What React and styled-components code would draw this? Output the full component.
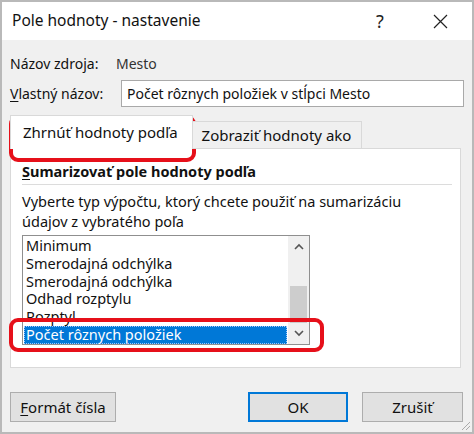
import React from "react";
import styled, { createGlobalStyle } from "styled-components";

const Global = createGlobalStyle`
  html, body { margin: 0; padding: 0; background: #f0f0f0; }
  * { box-sizing: border-box; }
  body { font-family: "Noto Sans", "Open Sans", sans-serif; color: #111; }
`;

const Window = styled.div`
  position: relative;
  width: 474px;
  height: 434px;
  border: 2px solid #b9b9b9;
  display: flex;
  flex-direction: column;
  background: #f0f0f0;
  font-size: 14px;
`;

const TitleBar = styled.div`
  height: 38px;
  background: #fff;
  display: flex;
  align-items: center;
  padding-left: 10px;
  padding-right: 9px;
  flex: none;
`;

const Title = styled.div`
  flex: 1;
  font-size: 15.5px;
  color: #111;
  padding-bottom: 2px;
`;

const TitleButton = styled.div`
  width: ${(p) => p.$w}px;
  height: 38px;
  display: flex;
  align-items: center;
  justify-content: center;
  font-size: 18px;
  color: #222;
`;

const Body = styled.div`
  flex: 1;
  display: flex;
  flex-direction: column;
  padding: 11px 8px 0 8px;
`;

const FieldRow = styled.div`
  display: flex;
  align-items: center;
  height: ${(p) => p.$h}px;
`;

const Label = styled.div`
  width: ${(p) => p.$w}px;
  flex: none;
`;

const Value = styled.span`
  color: #333;
`;

const U = styled.span`
  text-decoration: underline;
  text-underline-offset: 2px;
`;

const Input = styled.div`
  width: 343px;
  height: 27px;
  border: 1px solid #a9a9a9;
  background: #fff;
  display: flex;
  align-items: center;
  padding-left: 5px;
`;

const TabStrip = styled.div`
  display: flex;
  align-items: flex-end;
  margin-top: 5px;
  height: 33px;
  position: relative;
  z-index: 1;
`;

const Tab = styled.div`
  height: ${(p) => (p.$active ? 34 : 28)}px;
  padding: ${(p) => (p.$active ? "0 14px 2px 12px" : "0 10px 0 9px")};
  display: flex;
  align-items: center;
  background: ${(p) => (p.$active ? "#fff" : "#f0f0f0")};
  border: 1px solid #d9d9d9;
  border-bottom: ${(p) => (p.$active ? "none" : "1px solid #d9d9d9")};
  margin-left: ${(p) => (p.$active ? 0 : -1)}px;
  font-size: 15px;
`;

const Panel = styled.div`
  width: 451px;
  height: 220px;
  background: #fff;
  border: 1px solid #d9d9d9;
  margin-top: -1px;
  padding: 12px 8px 0 11px;
  display: flex;
  flex-direction: column;
`;

const Heading = styled.div`
  font-weight: bold;
  font-size: 14.5px;
  line-height: 20px;
`;

const Separator = styled.div`
  height: 1px;
  background: #dcdcdc;
  margin: 3px 0 6px 0;
`;

const Description = styled.div`
  line-height: 20px;
  font-size: 14.5px;
`;

const ListBox = styled.div`
  margin-top: 4px;
  width: 288px;
  height: 110px;
  border: 1px solid #8f8f8f;
  background: #fff;
  display: flex;
`;

const Items = styled.div`
  flex: 1;
  display: flex;
  flex-direction: column;
  padding: 1px 1px 0 1px;
`;

const Item = styled.div`
  height: 18px;
  line-height: 17px;
  padding-left: 2px;
  font-size: 14.5px;
  white-space: nowrap;
  background: ${(p) => (p.$sel ? "#0078d7" : "transparent")};
  color: ${(p) => (p.$sel ? "#fff" : "#111")};
  outline: ${(p) => (p.$sel ? "1px dotted #9ec8ff" : "none")};
  outline-offset: -1px;
`;

const ScrollBar = styled.div`
  width: 21px;
  background: #f0f0f0;
  display: flex;
  flex-direction: column;
`;

const Arrow = styled.div`
  height: 21px;
  display: flex;
  align-items: center;
  justify-content: center;
`;

const Track = styled.div`
  flex: 1;
  display: flex;
  flex-direction: column;
  padding: 0 2px;
`;

const Thumb = styled.div`
  margin-top: ${(p) => p.$top}px;
  height: ${(p) => p.$h}px;
  background: #cdcdcd;
`;

const ButtonRow = styled.div`
  display: flex;
  margin-top: 24px;
`;

const Button = styled.div`
  width: ${(p) => p.$w}px;
  height: 30px;
  display: flex;
  align-items: center;
  justify-content: center;
  background: #e1e1e1;
  border: ${(p) => (p.$focus ? "2px solid #0078d7" : "1px solid #adadad")};
  margin-left: ${(p) => p.$ml || 0}px;
  font-size: 15px;
`;

const Annotation = styled.div`
  position: absolute;
  left: ${(p) => p.$x}px;
  top: ${(p) => p.$y}px;
  width: ${(p) => p.$w}px;
  height: ${(p) => p.$h}px;
  border: 4px solid #e6101a;
  border-radius: 9px;
  pointer-events: none;
`;

const Grip = styled.svg`
  position: absolute;
  right: 1px;
  bottom: 1px;
`;

const Chevron = ({ up }) => (
  <svg width="10" height="7" viewBox="0 0 10 7">
    <path
      d={up ? "M1 6 L5 2 L9 6" : "M1 1 L5 5 L9 1"}
      fill="none"
      stroke="#555"
      strokeWidth="1.6"
    />
  </svg>
);

export default function App() {
  const items = [
    "Minimum",
    "Smerodajná odchýlka",
    "Smerodajná odchýlka",
    "Odhad rozptylu",
    "Rozptyl",
    "Počet rôznych položiek",
  ];
  return (
    <>
      <Global />
      <Window>
        <TitleBar>
          <Title>Pole hodnoty - nastavenie</Title>
          <TitleButton $w={74}>?</TitleButton>
          <TitleButton $w={46}>
            <svg width="15" height="15" viewBox="0 0 15 15">
              <path d="M1 1 L14 14 M14 1 L1 14" stroke="#222" strokeWidth="1.2" />
            </svg>
          </TitleButton>
        </TitleBar>
        <Body>
          <FieldRow $h={24}>
            <Label $w={106}>Názov zdroja:</Label>
            <Value>Mesto</Value>
          </FieldRow>
          <FieldRow $h={36}>
            <Label $w={111}>
              <U>V</U>lastný názov:
            </Label>
            <Input>Počet rôznych položiek v stĺpci Mesto</Input>
          </FieldRow>
          <TabStrip>
            <Tab $active>Zhrnúť hodnoty podľa</Tab>
            <Tab>Zobraziť hodnoty ako</Tab>
          </TabStrip>
          <Panel>
            <Heading>
              <U>S</U>umarizovať pole hodnoty podľa
            </Heading>
            <Separator />
            <Description>
              Vyberte typ výpočtu, ktorý chcete použiť na sumarizáciu
              <br />
              údajov z vybratého poľa
            </Description>
            <ListBox>
              <Items>
                {items.map((t, i) => (
                  <Item key={i} $sel={i === items.length - 1}>
                    {t}
                  </Item>
                ))}
              </Items>
              <ScrollBar>
                <Arrow>
                  <Chevron up />
                </Arrow>
                <Track>
                  <Thumb $top={29} $h={37} />
                </Track>
                <Arrow>
                  <Chevron />
                </Arrow>
              </ScrollBar>
            </ListBox>
          </Panel>
          <ButtonRow>
            <Button $w={106}>
              <span>
                <U>F</U>ormát čísla
              </span>
            </Button>
            <Button $w={100} $ml={132} $focus>
              OK
            </Button>
            <Button $w={101} $ml={14}>
              Zrušiť
            </Button>
          </ButtonRow>
        </Body>
        <Annotation $x={7} $y={113} $w={187} $h={47} />
        <Annotation $x={7} $y={316} $w={315} $h={34} />
        <Grip width="12" height="12" viewBox="0 0 12 12">
          <path d="M11 3 L3 11 M11 7 L7 11" stroke="#aaa" strokeWidth="1" />
        </Grip>
      </Window>
    </>
  );
}
